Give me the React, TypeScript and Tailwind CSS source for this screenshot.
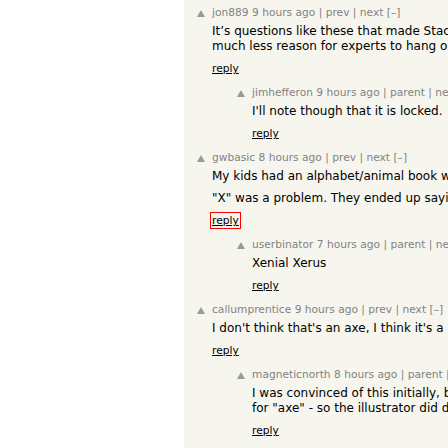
import React from "react";

const Tri = () => (
  <svg width="8" height="7" viewBox="0 0 8 7" className="block">
    <polygon points="4,0 8,7 0,7" fill="#9a9a9a" />
  </svg>
);

type C = {
  indent: number;
  user: string;
  age: string;
  nav: string;
  paras: React.ReactNode[];
  boxed?: boolean;
};

const comments: C[] = [
  {
    indent: 0,
    user: "jon889",
    age: "9 hours ago",
    nav: "prev | next [–]",
    paras: [
      <>
        It’s questions like these that made Stack Exchange great, there’s now
        <br />
        much less reason for experts to hang out there anymore.
      </>,
    ],
  },
  {
    indent: 1,
    user: "jimhefferon",
    age: "9 hours ago",
    nav: "parent | next [–]",
    paras: [<>I'll note though that it is locked.</>],
  },
  {
    indent: 0,
    user: "gwbasic",
    age: "8 hours ago",
    nav: "prev | next [–]",
    paras: [
      <>My kids had an alphabet/animal book where every letter had an animal.</>,
      <>"X" was a problem. They ended up saying X-ray fish.</>,
    ],
    boxed: true,
  },
  {
    indent: 1,
    user: "userbinator",
    age: "7 hours ago",
    nav: "parent | next [–]",
    paras: [<>Xenial Xerus</>],
  },
  {
    indent: 0,
    user: "callumprentice",
    age: "9 hours ago",
    nav: "prev | next [–]",
    paras: [<>I don't think that's an axe, I think it's a hatchet.</>],
  },
  {
    indent: 1,
    user: "magneticnorth",
    age: "8 hours ago",
    nav: "parent | next [–]",
    paras: [
      <>
        I was convinced of this initially, but then I looked up the X page
        <br />
        for "axe" - so the illustrator did draw an axe.
      </>,
    ],
  },
];

export default function App() {
  return (
    <div
      className="flex w-[448px] h-[448px] overflow-hidden bg-white"
      style={{ fontFamily: '"DejaVu Sans", Verdana, sans-serif' }}
    >
      <div className="w-[184px] shrink-0 bg-white" />
      <div className="flex-1 min-w-0 bg-[#f6f6ef] pt-[6px] overflow-hidden">
        {comments.map((c, i) => (
          <div
            key={i}
            className={`flex whitespace-nowrap ${c.indent ? "pl-[40px]" : ""} ${i > 0 ? "mt-[10px]" : ""}`}
          >
            <div className="w-[28px] shrink-0 pl-[13px] pt-[4px]">
              <Tri />
            </div>
            <div className="min-w-0">
              <div className="text-[10.67px] leading-[14px] text-[#828282]">
                {c.user} {c.age} | {c.nav}
              </div>
              {c.paras.map((p, j) => (
                <div
                  key={j}
                  className={`text-[12px] leading-[15px] text-black ${j === 0 ? "mt-[4px]" : "mt-[7px]"}`}
                >
                  {p}
                </div>
              ))}
              <div className="mt-[8px] text-[10.67px] leading-[14px]">
                <span
                  className={`underline text-black ${c.boxed ? "outline outline-1 outline-[#ff0000] outline-offset-[1px]" : ""}`}
                >
                  reply
                </span>
              </div>
            </div>
          </div>
        ))}
      </div>
    </div>
  );
}
